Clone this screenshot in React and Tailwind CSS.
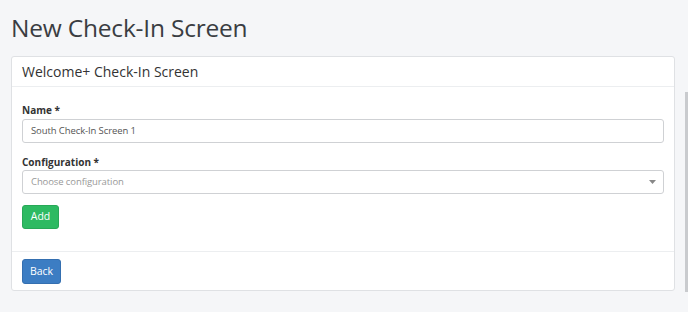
export default function App() {
  return (
    <div className="relative w-[688px] h-[312px] overflow-hidden bg-[#f5f6f8] font-['Open_Sans',sans-serif] text-[#333]">
      <div className="px-[11px]">
        <h1 className="pt-[12px] h-[56px] text-[24.5px] leading-[32px] font-normal text-[#3a3d42] tracking-[-0.2px]">
          New Check-In Screen
        </h1>

        <div className="w-[664px] bg-white border border-[#dfe1e4] rounded-[3px]">
          {/* Header */}
          <div className="h-[30px] px-[10px] flex items-center border-b border-[#eceef0]">
            <span className="text-[14px] text-[#333]">Welcome+ Check-In Screen</span>
          </div>

          {/* Body */}
          <div className="px-[10px] pt-[17px] pb-[22px]">
            <label className="block text-[10px] font-bold leading-[13px] mb-[2px] text-[#333]">Name *</label>
            <div className="h-[24px] w-[642px] border border-[#cfd1d4] rounded-[3px] px-[8px] flex items-center text-[9.5px] tracking-[-0.1px] text-[#555]">
              South Check-In Screen 1
            </div>

            <label className="block mt-[13px] text-[10px] font-bold leading-[13px] mb-[1px] text-[#333]">Configuration *</label>
            <div className="h-[24px] w-[642px] border border-[#cfd1d4] rounded-[3px] pl-[8px] pr-[8px] flex items-center justify-between text-[9.5px] tracking-[-0.1px] text-[#999]">
              <span>Choose configuration</span>
              <svg width="7" height="4" viewBox="0 0 7 4" className="mr-[-1px]">
                <path d="M0 0h7L3.5 4z" fill="#888" />
              </svg>
            </div>

            <button className="mt-[11px] h-[24px] w-[37px] rounded-[3px] bg-[#2dba62] border border-[#27a857] text-white text-[10.5px] flex items-center justify-center">
              Add
            </button>
          </div>

          {/* Footer */}
          <div className="border-t border-[#eceef0] px-[10px] pt-[7px] pb-[6px]">
            <button className="h-[25px] w-[39px] rounded-[3px] bg-[#3c7dc3] border border-[#346fb0] text-white text-[10.5px] flex items-center justify-center">
              Back
            </button>
          </div>
        </div>
      </div>

      {/* scrollbar strip */}
      <div className="absolute right-0 top-[92px] w-[3px] h-[200px] bg-[#c9cbce]" />
    </div>
  );
}
